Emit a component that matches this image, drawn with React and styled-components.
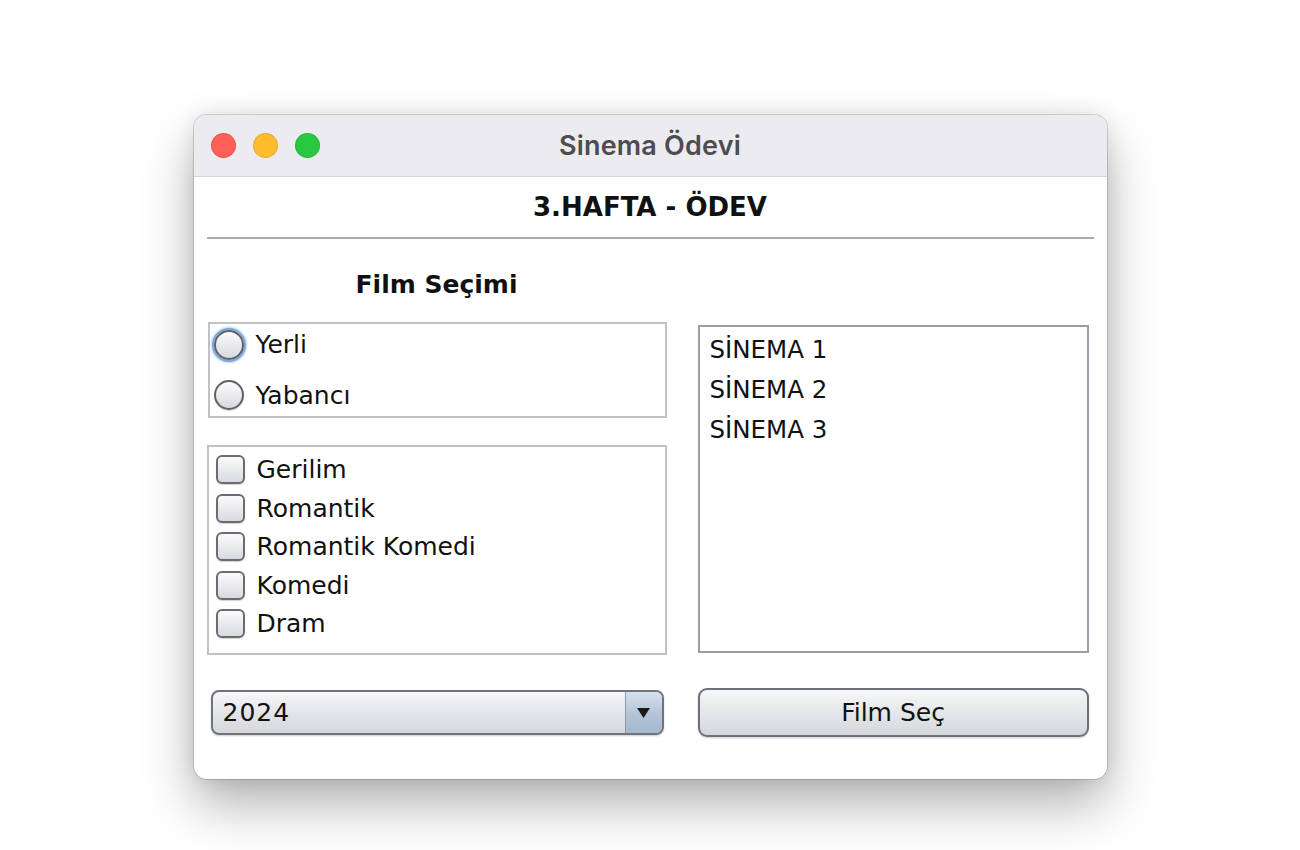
import React from "react"
import styled, { createGlobalStyle } from "styled-components"

const GlobalStyle = createGlobalStyle`
  html, body {
    margin: 0;
    padding: 0;
    background: #ffffff;
  }
  body {
    font-family: "DejaVu Sans", "Liberation Sans", sans-serif;
    color: #111;
  }
`

const Page = styled.div`
  width: 1300px;
  height: 850px;
  padding-top: 115px;
  box-sizing: border-box;
  overflow: hidden;
`

const Window = styled.div`
  width: 913px;
  height: 664px;
  margin: 0 auto;
  border-radius: 13px;
  background: #ffffff;
  overflow: hidden;
  display: flex;
  flex-direction: column;
  box-shadow: 0 26px 52px rgba(0, 0, 0, 0.3), 0 0 20px rgba(0, 0, 0, 0.1),
    0 0 0 1px rgba(0, 0, 0, 0.14);
`

const TitleBar = styled.div`
  position: relative;
  height: 61px;
  flex-shrink: 0;
  background: #ececf0;
  border-bottom: 1px solid #d5d5d8;
  display: flex;
  align-items: center;
  justify-content: center;
`

const Lights = styled.div`
  position: absolute;
  left: 17px;
  top: 18px;
  display: flex;
  gap: 17px;
`

const Light = styled.span`
  width: 25px;
  height: 25px;
  border-radius: 50%;
  background: ${p => p.color};
  box-shadow: inset 0 0 0 1px rgba(0, 0, 0, 0.1);
`

const WindowTitle = styled.div`
  font-family: Inter, "Liberation Sans", sans-serif;
  font-weight: 600;
  font-size: 27px;
  color: #4d4d4f;
  letter-spacing: 0.2px;
`

const Content = styled.div`
  flex: 1;
  padding: 0 13px;
`

const Heading = styled.div`
  height: 60px;
  display: flex;
  align-items: center;
  justify-content: center;
  font-weight: bold;
  font-size: 26px;
  color: #111;
  border-bottom: 2px solid #a9abb4;
`

const Body = styled.div`
  display: grid;
  grid-template-columns: 460px 391px;
  column-gap: 31px;
  padding-top: 23px;
`

const SectionTitle = styled.div`
  height: 44px;
  display: flex;
  align-items: center;
  justify-content: center;
  font-weight: bold;
  font-size: 25px;
  color: #111;
`

const LeftStack = styled.div`
  display: flex;
  flex-direction: column;
  gap: 27px;
  margin-top: 16px;
`

const GroupBox = styled.div`
  box-sizing: border-box;
  height: ${p => p.h}px;
  margin-left: ${p => p.inset || 0}px;
  border: 2px solid #c2c2c4;
  display: flex;
  flex-direction: column;
  padding: ${p => p.pad};
  gap: ${p => p.gap}px;
`

const Option = styled.label`
  display: flex;
  align-items: center;
  gap: 12px;
  height: ${p => p.h}px;
  font-size: 25px;
  color: #111;
`

const Radio = styled.span`
  box-sizing: border-box;
  width: 30px;
  height: 30px;
  border-radius: 50%;
  border: 2px solid #5f6166;
  background: linear-gradient(#fbfbfc, #d7d9dd);
  box-shadow: ${p =>
    p.focused
      ? "0 0 0 2px #7ea9dc, 0 0 2px 3px rgba(126,169,220,0.5)"
      : "0 1px 1px rgba(0,0,0,0.2)"};
`

const Check = styled.span`
  box-sizing: border-box;
  width: 29px;
  height: 29px;
  border-radius: 6px;
  border: 2px solid #6a6c72;
  background: linear-gradient(#fbfbfc, #d8dade);
  box-shadow: 0 1px 1px rgba(0, 0, 0, 0.18);
`

const ListBox = styled.div`
  box-sizing: border-box;
  margin-top: 19px;
  height: 328px;
  border: 2px solid #9c9da8;
  padding: 2px 10px;
  display: flex;
  flex-direction: column;
`

const ListItem = styled.div`
  height: 40px;
  display: flex;
  align-items: center;
  font-size: 24.5px;
  color: #111;
`

const Combo = styled.div`
  box-sizing: border-box;
  margin: 35px 3px 0 4px;
  height: 45px;
  border: 2px solid #6f737c;
  border-radius: 8px;
  overflow: hidden;
  display: flex;
  background: linear-gradient(#f7f7f9, #e1e3e7 55%, #d6d8dc);
  box-shadow: 0 1px 2px rgba(0, 0, 0, 0.2);
`

const ComboValue = styled.div`
  flex: 1;
  display: flex;
  align-items: center;
  padding-left: 10px;
  font-size: 25px;
  letter-spacing: 1px;
  color: #111;
`

const ComboArrow = styled.div`
  width: 36px;
  border-left: 1px solid #8c99a8;
  background: linear-gradient(#d6e1ec, #b2c4d6 55%, #a6b9cc);
  display: flex;
  align-items: center;
  justify-content: center;
`

const Button = styled.button`
  box-sizing: border-box;
  margin-top: 33px;
  height: 49px;
  border: 2px solid #6d7078;
  border-radius: 9px;
  background: linear-gradient(#f7f7f9, #e3e5e8 55%, #d5d7db);
  box-shadow: 0 1px 2px rgba(0, 0, 0, 0.2);
  font-family: "DejaVu Sans", sans-serif;
  font-size: 25px;
  color: #111;
  padding: 0;
`

const genres = ["Gerilim", "Romantik", "Romantik Komedi", "Komedi", "Dram"]
const cinemas = ["SİNEMA 1", "SİNEMA 2", "SİNEMA 3"]

export default function App() {
  return (
    <Page>
      <GlobalStyle />
      <Window>
        <TitleBar>
          <Lights>
            <Light color="#fe5f57" />
            <Light color="#febc2e" />
            <Light color="#28c840" />
          </Lights>
          <WindowTitle>Sinema Ödevi</WindowTitle>
        </TitleBar>
        <Content>
          <Heading>3.HAFTA - ÖDEV</Heading>
          <Body>
            <SectionTitle>Film Seçimi</SectionTitle>
            <div />
            <LeftStack>
              <GroupBox h={96} inset={1} pad="2px 4px" gap={13}>
                <Option h={38}>
                  <Radio focused />
                  Yerli
                </Option>
                <Option h={38}>
                  <Radio />
                  Yabancı
                </Option>
              </GroupBox>
              <GroupBox h={210} pad="8px 7px" gap={9.5}>
                {genres.map(g => (
                  <Option h={29} key={g}>
                    <Check />
                    {g}
                  </Option>
                ))}
              </GroupBox>
            </LeftStack>
            <ListBox>
              {cinemas.map(c => (
                <ListItem key={c}>{c}</ListItem>
              ))}
            </ListBox>
            <Combo>
              <ComboValue>2024</ComboValue>
              <ComboArrow>
                <svg width="15" height="12" viewBox="0 0 15 12">
                  <path d="M1 1h13L7.5 11z" fill="#1a1a1a" />
                </svg>
              </ComboArrow>
            </Combo>
            <Button>Film Seç</Button>
          </Body>
        </Content>
      </Window>
    </Page>
  )
}
